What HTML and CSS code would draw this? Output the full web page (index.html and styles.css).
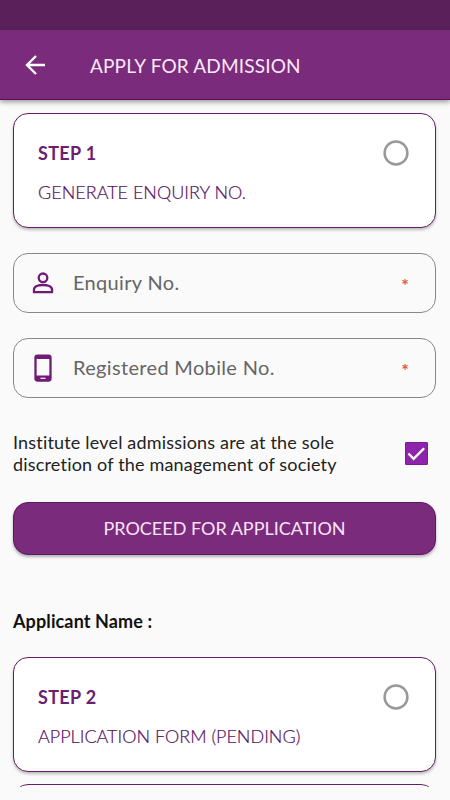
FILE: index.html
```html
<!DOCTYPE html>
<html lang="en">
<head>
<meta charset="utf-8">
<title>Apply for Admission</title>
<link rel="stylesheet" href="styles.css">
</head>
<body>
<div class="status-bar"></div>
<header class="app-bar">
  <svg class="back" viewBox="0 0 24 24"><path d="M22 12H4.500M13 3 4 12l9 9"/></svg>
  <h1><span class="t-title">APPLY FOR ADMISSION</span></h1>
</header>
<main class="content">
  <section class="card">
    <div class="card-text"><h2 class="t-step">STEP 1</h2><p class="t-generate">GENERATE ENQUIRY NO.</p></div>
    <svg class="radio" viewBox="0 0 26 26"><circle cx="13" cy="13" r="11.400"/></svg>
  </section>
  <div class="field">
    <svg class="field-icon" viewBox="0 0 30 30"><circle cx="15" cy="9.800" r="4.300"/><path d="M6 24.200v-2.700c0-6 18-6 18 0v2.700z"/></svg>
    <span class="label t-enquiry">Enquiry No.</span><span class="required">*</span>
  </div>
  <div class="field">
    <svg class="field-icon" viewBox="0 0 30 30"><rect x="7.500" y="2.600" width="15" height="25" rx="2"/><path class="solid" d="M7 3h16v3H7zM7 22.500h16V27H7z"/><path class="slot" d="M12.500 25.300h5"/></svg>
    <span class="label t-mobile">Registered Mobile No.</span><span class="required">*</span>
  </div>
  <div class="consent">
    <p><span class="t-line1">Institute level admissions are at the sole</span><br><span class="t-line2">discretion of the management of society</span></p>
    <span class="checkbox"><svg viewBox="0 0 22 22"><path d="m2.500 11 5.500 5.500L19 5.500"/></svg></span>
  </div>
  <button class="proceed"><span class="t-proceed">PROCEED FOR APPLICATION</span></button>
  <p class="applicant"><span class="t-applicant">Applicant Name :</span></p>
  <section class="card">
    <div class="card-text"><h2 class="t-step">STEP 2</h2><p class="t-pending">APPLICATION FORM (PENDING)</p></div>
    <svg class="radio" viewBox="0 0 26 26"><circle cx="13" cy="13" r="11.400"/></svg>
  </section>
  <section class="card next"></section>
</main>
</body>
</html>
```
FILE: styles.css
```css
* { box-sizing: border-box; }
body {
  margin: 0;
  height: 800px;
  overflow: hidden;
  background: #fafafa;
  font-family: Lato, "Open Sans", sans-serif;
  font-variant-ligatures: none;
}
h1, h2, p { margin: 0; font-weight: 400; }
.status-bar { height: 30px; background: #5a205a; }
.app-bar {
  position: relative;
  display: flex;
  align-items: center;
  height: 70px;
  padding-left: 23px;
  background: #7a2b7b;
  border-bottom: 1px solid #5b105d;
  box-shadow: 0 2px 5px rgba(0, 0, 0, .4);
  color: #fbe9fb;
}
.back { width: 24px; height: 24px; margin-right: 43px; fill: none; stroke: #fff; stroke-width: 2.4; }
h1 { padding-top: 2px; font-size: 19px; line-height: 24px; letter-spacing: .17px; white-space: nowrap; }
.content { height: 687px; padding: 13px 14px 0 13px; overflow: hidden; }
.card {
  display: flex;
  justify-content: space-between;
  height: 115px;
  padding: 26px 26px 0 24px;
  background: #fff;
  border: 1px solid #641e68;
  border-radius: 15px;
  box-shadow: 0 2px 3px rgba(0, 0, 0, .25);
  color: #692070;
}
.card h2 { font-size: 18px; line-height: 27px; font-weight: 700; letter-spacing: .35px; }
.card p { margin-top: 12px; font-size: 18px; line-height: 26px; white-space: nowrap; font-weight: 300; color: #571060; -webkit-text-stroke: .2px #571060; }
.radio { width: 26px; height: 26px; fill: none; stroke: #999; stroke-width: 2.500; }
.field {
  display: flex;
  align-items: center;
  height: 60px;
  margin-top: 25px;
  padding: 0 26px 0 14px;
  border: 1px solid #888;
  border-radius: 15px;
}
.field-icon { width: 30px; height: 30px; margin-right: 15px; fill: none; stroke: #711b78; stroke-width: 2.300; }
.field-icon .solid { fill: #711b78; stroke: none; }
.field-icon .slot { stroke: #fff; stroke-width: 1.200; }
.label { flex: 1; padding-bottom: 2px; color: #666; font-size: 20px; line-height: 26px; letter-spacing: .33px; white-space: nowrap; }
.required { color: #e04b45; font-size: 18px; line-height: 20px; margin-top: 4px; -webkit-text-stroke: .2px #e04b45; }
.consent {
  display: flex;
  justify-content: space-between;
  align-items: center;
  height: 46px;
  margin-top: 32px;
  padding-right: 8px;
  color: #222;
  font-size: 18px;
  line-height: 22.500px;
  letter-spacing: .18px;
  white-space: nowrap;
}
.checkbox { width: 23px; height: 23px; background: #8e24aa; border: 1px solid #7b1b98; border-radius: 1px; }
.checkbox svg { display: block; width: 21px; height: 21px; fill: none; stroke: #fff; stroke-width: 2.500; }
.proceed {
  display: block;
  width: 100%;
  height: 53px;
  margin-top: 26px;
  padding: 0 0 2px;
  border: 1px solid #641466;
  border-radius: 15px;
  background: #7a2b7b;
  box-shadow: 0 2px 3px rgba(0, 0, 0, .3);
  color: #fbe3fb;
  font: 18px/26px Lato, "Open Sans", sans-serif;
}
.applicant { margin: 54px 0 23px; color: #111; font-size: 18px; line-height: 25px; }
.t-applicant { font-weight: 700; letter-spacing: .12px; }
.next { margin-top: 12px; box-shadow: none; }
```
